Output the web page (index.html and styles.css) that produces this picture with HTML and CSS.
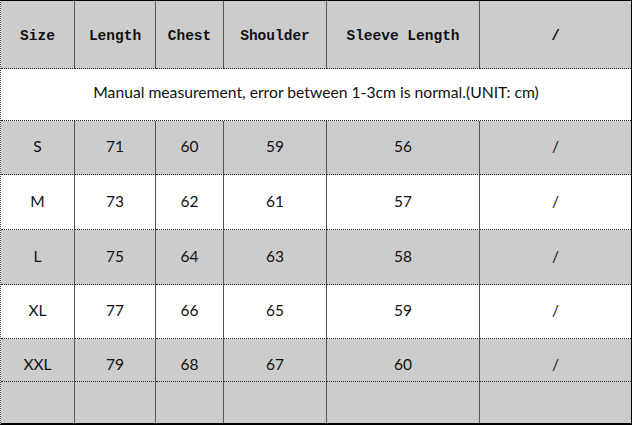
FILE: index.html
```html
<!DOCTYPE html>
<html>
<head>
<meta charset="utf-8">
<link rel="stylesheet" href="styles.css">
</head>
<body>
<div class="chart">
  <div class="cell head shade">Size</div>
  <div class="cell head shade">Length</div>
  <div class="cell head shade">Chest</div>
  <div class="cell head shade">Shoulder</div>
  <div class="cell head shade">Sleeve Length</div>
  <div class="cell head shade last">/</div>

  <div class="cell note last">Manual measurement, error between 1-3cm is normal.(UNIT: cm)</div>

  <div class="cell shade">S</div><div class="cell shade">71</div><div class="cell shade">60</div><div class="cell shade">59</div><div class="cell shade">56</div><div class="cell shade last">/</div>
  <div class="cell">M</div><div class="cell">73</div><div class="cell">62</div><div class="cell">61</div><div class="cell">57</div><div class="cell last">/</div>
  <div class="cell shade">L</div><div class="cell shade">75</div><div class="cell shade">64</div><div class="cell shade">63</div><div class="cell shade">58</div><div class="cell shade last">/</div>
  <div class="cell">XL</div><div class="cell">77</div><div class="cell">66</div><div class="cell">65</div><div class="cell">59</div><div class="cell last">/</div>
  <div class="cell shade low">XXL</div><div class="cell shade low">79</div><div class="cell shade low">68</div><div class="cell shade low">67</div><div class="cell shade low">60</div><div class="cell shade low last">/</div>
  <div class="cell shade end"></div><div class="cell shade end"></div><div class="cell shade end"></div><div class="cell shade end"></div><div class="cell shade end"></div><div class="cell shade end last"></div>
</div>
</body>
</html>
```

FILE: styles.css
```css
html, body {
  margin: 0;
  padding: 0;
  background: #fff;
}

.chart {
  box-sizing: border-box;
  width: 632px;
  height: 425px;
  display: grid;
  grid-template-columns: 74px 81px 68px 103px 153px 151px;
  grid-template-rows: 68px 52px 54px 55px 55px 54px 43px 41px;
  border-top: 1px solid #000;
  border-right: 1px solid #000;
  border-bottom: 2px solid #000;
  border-left: 1px dotted #444;
  font-family: "Lato", "Liberation Sans", sans-serif;
  font-size: 15.5px;
  color: #111;
}

.cell {
  box-sizing: border-box;
  display: flex;
  align-items: center;
  justify-content: center;
  padding-bottom: 3px;
  border-right: 1px solid #555;
  border-bottom: 1px dotted #222;
  background: #fff;
}

.cell.last {
  border-right: none;
}

.cell.end {
  border-bottom: none;
}

.shade {
  background: #cccccc;
}

.head {
  font-family: "Liberation Mono", monospace;
  font-weight: bold;
  font-size: 14.5px;
  color: #111;
  padding-top: 3px;
  padding-bottom: 0;
}

.note {
  grid-column: 1 / -1;
  font-size: 15.7px;
  padding-bottom: 5px;
}

.low {
  padding-top: 7px;
  padding-bottom: 0;
}
```
